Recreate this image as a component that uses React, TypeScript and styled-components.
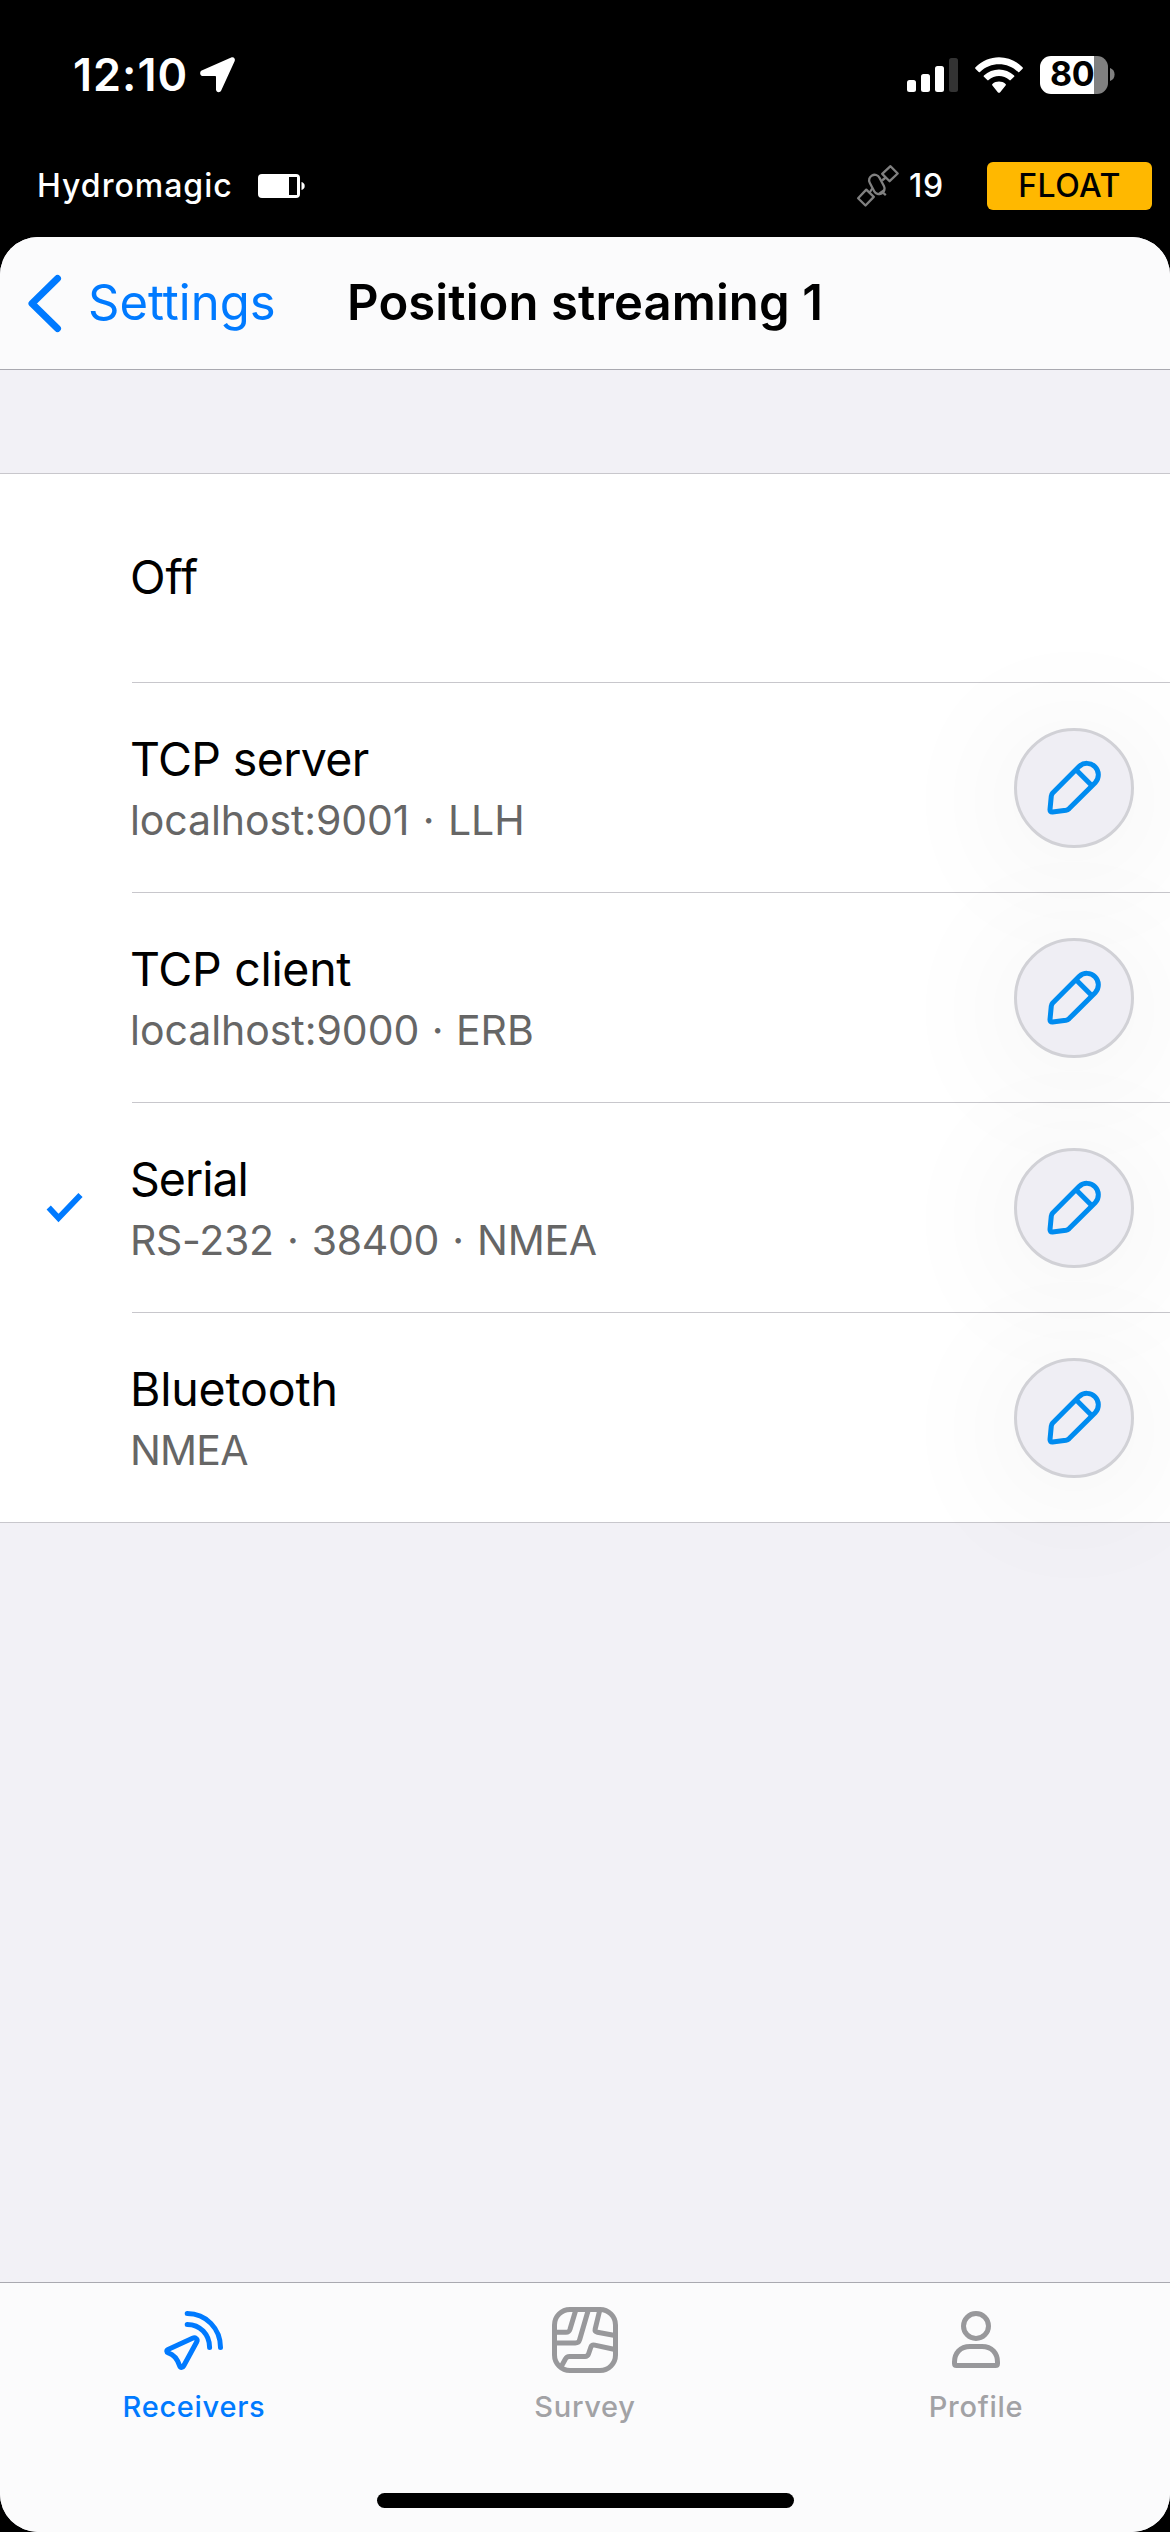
import React from "react";
import styled, { createGlobalStyle } from "styled-components";

const GlobalStyle = createGlobalStyle`
  *, *::before, *::after { box-sizing: border-box; }
  html, body { margin: 0; padding: 0; background: #000; }
  body { font-family: Inter, "Liberation Sans", sans-serif; }
  svg { display: block; flex: none; }
`;

const Screen = styled.div`
  width: 1170px;
  height: 2532px;
  display: flex;
  flex-direction: column;
  background: #000;
  overflow: hidden;
`;

const Label = styled.span<{
  $size: number;
  $weight?: number;
  $spacing?: number;
  $wordSpacing?: number;
  $color?: string;
}>`
  font-size: ${(p) => p.$size}px;
  font-weight: ${(p) => p.$weight ?? 400};
  letter-spacing: ${(p) => p.$spacing ?? 0}px;
  word-spacing: ${(p) => p.$wordSpacing ?? 0}px;
  color: ${(p) => p.$color ?? "#000"};
  line-height: 1.2;
  white-space: nowrap;
`;

const StatusBar = styled.header`
  height: 149px;
  flex: none;
  display: flex;
  justify-content: space-between;
  align-items: center;
  padding: 0 55px 0 73px;
`;

const StatusGroup = styled.div<{ $gap: number }>`
  display: flex;
  align-items: center;
  gap: ${(p) => p.$gap}px;
`;

const PhoneBattery = styled.div`
  width: 68px;
  height: 38px;
  border-radius: 11px;
  background: linear-gradient(to right, #fff 54px, #808080 54px);
  display: flex;
  align-items: center;
  padding-left: 10px;
`;

const DeviceBar = styled.div`
  height: 88px;
  flex: none;
  display: flex;
  justify-content: space-between;
  align-items: flex-start;
  padding: 13px 18px 0 37px;
`;

const DeviceGroup = styled.div<{ $gap: number }>`
  height: 48px;
  display: flex;
  align-items: center;
  gap: ${(p) => p.$gap}px;
`;

const FixBadge = styled.div`
  width: 165px;
  height: 48px;
  margin-left: 34px;
  border-radius: 6px;
  background: #ffb800;
  display: flex;
  align-items: center;
  justify-content: center;
`;

const Sheet = styled.main`
  flex: 1;
  display: flex;
  flex-direction: column;
  border-radius: 38px;
  overflow: hidden;
  background: #f2f1f6;
`;

const NavBar = styled.nav`
  height: 133px;
  flex: none;
  display: grid;
  grid-template-columns: 340px 490px 340px;
  align-items: center;
  background: #fbfbfc;
  border-bottom: 1px solid #a9a9b0;
`;

const BackButton = styled.a`
  display: flex;
  align-items: center;
  gap: 26px;
  padding-left: 27px;
`;

const NavTitle = styled.h1`
  margin: 0;
  display: flex;
  justify-content: center;
`;

const OptionList = styled.ul`
  list-style: none;
  margin: 103px 0 0;
  padding: 0;
  flex: none;
  background: #fff;
  border-top: 1px solid #c8c7cc;
  border-bottom: 1px solid #c8c7cc;
`;

const OptionRow = styled.li`
  height: 210px;
  display: grid;
  grid-template-columns: 132px 1fr;

  &:first-child, &:last-child { height: 209px; }
`;

const CheckCell = styled.div`
  display: flex;
  align-items: center;
  padding-left: 46px;
`;

const OptionBody = styled.div<{ $last: boolean }>`
  display: flex;
  align-items: center;
  justify-content: space-between;
  padding-right: 36px;
  border-bottom: ${(p) => (p.$last ? "none" : "1px solid #c8c7cc")};
`;

const OptionText = styled.div<{ $twoLine: boolean }>`
  display: flex;
  flex-direction: column;
  gap: 7.5px;
  margin-left: -2px;
  padding-top: ${(p) => (p.$twoLine ? 2 : 0)}px;
`;

const EditButton = styled.button`
  width: 120px;
  height: 120px;
  padding: 0;
  border-radius: 50%;
  border: 3px solid #d1d1d6;
  background: #efeef4;
  box-shadow: 0 12px 135px 12px rgba(0, 0, 0, 0.06);
  display: flex;
  align-items: center;
  justify-content: center;
`;

const TabBar = styled.footer`
  margin-top: auto;
  height: 250px;
  flex: none;
  display: flex;
  flex-direction: column;
  justify-content: space-between;
  align-items: center;
  background: #fbfbfc;
  border-top: 1px solid #a9a9b0;
  padding-bottom: 24px;
`;

const Tabs = styled.div`
  width: 100%;
  display: grid;
  grid-template-columns: 388px 394px 388px;
  padding-top: 24px;
`;

const Tab = styled.a`
  display: flex;
  flex-direction: column;
  align-items: center;
  gap: 17px;
`;

const HomeIndicator = styled.div`
  width: 417px;
  height: 15px;
  border-radius: 8px;
  background: #000;
`;

const LocationIcon = () => (
  <svg width="37" height="37" viewBox="0 0 37 37" fill="#fff">
    <path d="M32.2 1.4 2.7 14.5C.3 15.6.9 20 3.4 20H16.2c.5 0 .8.3.8.8v12.8c0 3 4.1 3.4 5.2.9L35.7 5C36.7 2.5 34.5.4 32.2 1.4Z" />
  </svg>
);

const CellularIcon = () => (
  <svg width="51" height="34" viewBox="0 0 51 34" fill="#fff">
    <rect x="0" y="22" width="9" height="12" rx="2.5" />
    <rect x="14" y="16" width="9" height="18" rx="2.5" />
    <rect x="28" y="8" width="9" height="26" rx="2.5" />
    <rect x="42" y="0" width="9" height="34" rx="2.5" fill="#333" />
  </svg>
);

const WifiIcon = () => (
  <svg width="48" height="36" viewBox="0 0 48 36" fill="#fff">
    <path d="M.5 10.2C13.5-3.2 34.5-3.2 47.5 10.2c.6.6.6 1 .1 1.500l-3.300 3.200c-.5.5-.9.400-1.300 0C32.500 4.600 15.500 4.600 5 14.900c-.4.4-.8.5-1.300 0L.4 11.700c-.5-.5-.4-1 .1-1.500Z" />
    <path d="M8.900 18.400c8.500-8 21.700-8 30.200 0 .5.500.5.900 0 1.400l-3.400 3.300c-.5.500-.9.400-1.300 0-6-5.400-14.800-5.400-20.800 0-.4.400-.8.500-1.300 0l-3.400-3.300c-.5-.5-.5-.9 0-1.400Z" />
    <path d="M17.400 27c3.900-3.200 9.300-3.200 13.200 0 .5.400.5.900 0 1.400l-5.600 7c-.6.600-1.400.6-2 0l-5.600-7c-.5-.5-.5-1 0-1.400Z" />
  </svg>
);

const BatteryNub = () => (
  <svg width="5" height="13" viewBox="0 0 5 13" fill="#808080">
    <path d="M0 0c2.800.8 4.600 3.200 4.600 6.500S2.800 12.200 0 13Z" />
  </svg>
);

const ReceiverBatteryIcon = () => (
  <svg width="47" height="24" viewBox="0 0 47 24" fill="#fff">
    <rect width="42" height="24" rx="4" />
    <rect x="31" y="3" width="8" height="18" fill="#000" />
    <path d="M43.500 8c2 .6 3.200 2 3.200 4s-1.200 3.400-3.200 4Z" />
  </svg>
);

const SatelliteIcon = () => (
  <svg width="44" height="44" viewBox="0 0 44 44" fill="none" stroke="#808080" strokeWidth="2.3" strokeLinejoin="round">
    <path d="M34.5 2.200 41.700 9.500 33.600 17.200 26.200 9.900Z" />
    <path d="M10.300 25.600 17.800 32.900 9.500 41.500 2.100 34.200Z" />
    <rect x="15.300" y="10.200" width="11" height="20.500" rx="5.500" transform="rotate(-28 20.800 20.400)" />
    <path d="M26 16.500 29.800 13.500M16.200 24.500 13.700 28.500" />
    <path d="M22.500 30.300 28.500 26M26.200 28 29.800 31.200" />
  </svg>
);

const BackIcon = () => (
  <svg width="35" height="59" viewBox="0 0 35 59" fill="none" stroke="#007aff" strokeWidth="7" strokeLinecap="round" strokeLinejoin="round">
    <path d="M30.500 4.500 5 29.500 30.500 54.500" />
  </svg>
);

const CheckIcon = () => (
  <svg width="37" height="32" viewBox="0 0 37 32" fill="none" stroke="#007aff" strokeWidth="5.8">
    <path d="M2.700 15.500 12.500 26 34.500 3" />
  </svg>
);

const PencilIcon = () => (
  <svg width="56" height="56" viewBox="0 0 56 56" fill="none" stroke="#008cf0" strokeWidth="5" strokeLinejoin="round">
    <path d="M33.300 6.300A11.400 11.400 0 0 1 49.400 22.400L23.200 48.600Q21.700 50 20 50.300L6.500 52Q3.800 52.200 4 49.500L5.300 36Q5.500 34.300 6.700 33Z" />
    <path d="M30 9.700 46 25.700" />
  </svg>
);

const ReceiversIcon = () => (
  <svg width="66" height="66" viewBox="0 0 66 66" fill="none" stroke="#007aff" strokeWidth="5" strokeLinecap="round" strokeLinejoin="round">
    <path d="M26.200 6.500C45 6.500 59.500 21.500 59.500 40.500" />
    <path d="M26.200 17.400C39 17.400 48.600 27.500 48.600 40.500" />
    <path d="M31.500 31.300 7 42.500C5.300 43.300 5.400 45.300 7.200 45.900 12.500 47.500 16.600 52.500 18.600 58.800 19.300 61 21.600 60.900 22.600 59L35.800 34.700C37 32.300 34.500 30 31.500 31.300Z" />
  </svg>
);

const SurveyIcon = () => (
  <svg width="66" height="66" viewBox="0 0 66 66" fill="none" stroke="#98989b" strokeWidth="5" strokeLinejoin="round">
    <rect x="2.500" y="2.500" width="61" height="61" rx="15.500" />
    <path d="M23.800 3 18 22.200C17.200 24.600 16.500 25.300 14 25.300H3" />
    <path d="M36.300 3 27.700 32.500C26.900 35.200 26 35.900 23.300 35.900H3" />
    <path d="M47.800 3 43.200 21.800C42.700 24 43.200 24.800 45.400 25.200L63 28.500" />
    <path d="M63 42.500 42.700 38.100C40.500 37.700 39.500 38.300 38.900 40L36.600 46.800C35.900 48.900 35 49.500 33 49.500H17.500C15.300 49.500 14.400 50 13.400 52L9 60" />
  </svg>
);

const ProfileIcon = () => (
  <svg width="66" height="66" viewBox="0 0 66 66" fill="none" stroke="#98989b" strokeWidth="5" strokeLinejoin="round">
    <circle cx="33" cy="19" r="12.500" />
    <path d="M27 39.500H39C49 39.500 54.500 46.500 54.500 55V56.500C54.500 57.800 53.800 58.500 52.500 58.500H13.500C12.200 58.500 11.500 57.800 11.500 56.500V55C11.500 46.500 17 39.500 27 39.500Z" />
  </svg>
);

type Option = {
  name: string;
  spacing: number;
  detail?: string;
  detailSpacing?: number;
  detailWordSpacing?: number;
  selected?: boolean;
};

const options: Option[] = [
  { name: "Off", spacing: 0 },
  { name: "TCP server", spacing: -0.65, detail: "localhost:9001 · LLH", detailSpacing: -0.1, detailWordSpacing: 2 },
  { name: "TCP client", spacing: -0.3, detail: "localhost:9000 · ERB", detailSpacing: -0.05, detailWordSpacing: 1 },
  { name: "Serial", spacing: -1, detail: "RS-232 · 38400 · NMEA", detailSpacing: -0.3, detailWordSpacing: 2, selected: true },
  { name: "Bluetooth", spacing: -0.2, detail: "NMEA", detailSpacing: -0.8 },
];

const tabs = [
  { name: "Receivers", Icon: ReceiversIcon, color: "#007aff" },
  { name: "Survey", Icon: SurveyIcon, color: "#a2a2a5" },
  { name: "Profile", Icon: ProfileIcon, color: "#a2a2a5" },
];

export default function App() {
  return (
    <Screen>
      <GlobalStyle />
      <StatusBar>
        <StatusGroup $gap={11}>
          <Label $size={45} $weight={600} $spacing={1} $color="#fff">12:10</Label>
          <LocationIcon />
        </StatusGroup>
        <StatusGroup $gap={17}>
          <CellularIcon />
          <WifiIcon />
          <StatusGroup $gap={2}>
            <PhoneBattery>
              <Label $size={34} $weight={700} $spacing={-0.5}>80</Label>
            </PhoneBattery>
            <BatteryNub />
          </StatusGroup>
        </StatusGroup>
      </StatusBar>
      <DeviceBar>
        <DeviceGroup $gap={25}>
          <Label $size={32} $weight={500} $spacing={1} $color="#fff">Hydromagic</Label>
          <ReceiverBatteryIcon />
        </DeviceGroup>
        <DeviceGroup $gap={9}>
          <SatelliteIcon />
          <Label $size={32} $weight={500} $spacing={0.8} $color="#fff">19</Label>
          <FixBadge>
            <Label $size={32} $weight={500} $spacing={0.5}>FLOAT</Label>
          </FixBadge>
        </DeviceGroup>
      </DeviceBar>
      <Sheet>
        <NavBar>
          <BackButton>
            <BackIcon />
            <Label $size={49} $color="#007aff">Settings</Label>
          </BackButton>
          <NavTitle>
            <Label $size={49} $weight={600} $spacing={0.1}>Position streaming 1</Label>
          </NavTitle>
        </NavBar>
        <OptionList>
          {options.map((option, index) => (
            <OptionRow key={option.name}>
              <CheckCell>{option.selected && <CheckIcon />}</CheckCell>
              <OptionBody $last={index === options.length - 1}>
                <OptionText $twoLine={Boolean(option.detail)}>
                  <Label $size={46.5} $spacing={option.spacing}>{option.name}</Label>
                  {option.detail && (
                    <Label
                      $size={41}
                      $spacing={option.detailSpacing}
                      $wordSpacing={option.detailWordSpacing}
                      $color="#666"
                    >
                      {option.detail}
                    </Label>
                  )}
                </OptionText>
                {option.detail && (
                  <EditButton aria-label="Edit">
                    <PencilIcon />
                  </EditButton>
                )}
              </OptionBody>
            </OptionRow>
          ))}
        </OptionList>
        <TabBar>
          <Tabs>
            {tabs.map(({ name, Icon, color }) => (
              <Tab key={name}>
                <Icon />
                <Label $size={29} $weight={500} $spacing={0.7} $color={color}>{name}</Label>
              </Tab>
            ))}
          </Tabs>
          <HomeIndicator />
        </TabBar>
      </Sheet>
    </Screen>
  );
}
